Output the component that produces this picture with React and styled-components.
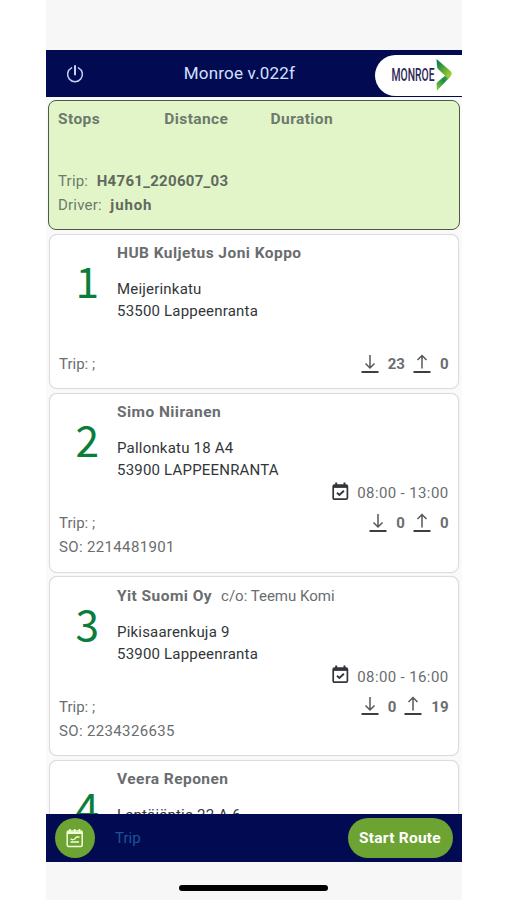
import React from 'react';
import styled, { createGlobalStyle } from 'styled-components';

const GlobalStyle = createGlobalStyle`
  * {
    box-sizing: border-box;
  }

  body {
    margin: 0;
    background: #ffffff;
    font-family: Roboto, 'Liberation Sans', sans-serif;
    font-size: 15px;
    color: #6a6d70;
  }
`;

const Screen = styled.div`
  display: flex;
  flex-direction: column;
  width: 415.5px;
  height: 900px;
  margin-left: 46px;
  background: #f7f7f7;
  overflow: hidden;
`;

const Header = styled.header`
  display: grid;
  grid-template-columns: 58px 1fr 86.5px;
  align-items: center;
  flex: none;
  height: 47.5px;
  margin-top: 49.5px;
  background: #020b52;
`;

const PowerButton = styled.button`
  display: flex;
  margin-left: 20px;
  padding: 0;
  width: 18px;
  border: none;
  background: none;
  color: #c3d3f5;
`;

const Title = styled.h1`
  margin: 0;
  text-align: center;
  font-size: 17px;
  font-weight: 400;
  letter-spacing: 0.2px;
  color: #d1e0ff;
`;

const LogoPill = styled.div`
  display: flex;
  align-items: center;
  height: 41px;
  margin-top: 4px;
  padding-left: 16px;
  border-radius: 20.5px 0 0 20.5px;
  background: #ffffff;
`;

const Content = styled.main`
  display: flex;
  flex-direction: column;
  flex: none;
  height: 716.5px;
  padding: 3px 2px 0;
  overflow: hidden;
  background: #fafafa;
`;

const Summary = styled.section`
  flex: none;
  height: 130px;
  margin-bottom: 3.5px;
  padding: 7px 9px;
  border: 1.5px solid #4c5a48;
  border-radius: 8px;
  background: #e2f5c8;
`;

const SummaryHead = styled.div`
  display: grid;
  grid-template-columns: 106.3px 106.3px 1fr;
  height: 60.5px;
  line-height: 23px;
  font-size: 15.5px;
  font-weight: 700;
  letter-spacing: 0.4px;
  color: #6c7a6c;
`;

const SummaryLine = styled.div`
  display: flex;
  gap: 8.5px;
  line-height: 24.4px;
  letter-spacing: 0.2px;
  color: #6c7a6c;

  b {
    letter-spacing: ${props => props.$spacing || '0.3px'};
    color: #5f6a5f;
  }
`;

const StopCard = styled.article`
  display: grid;
  grid-template-columns: 58px 1fr;
  grid-template-rows: 22px 14px 44px 24px 6px auto;
  flex: none;
  height: ${props => (props.$tall ? '180px' : '155.5px')};
  margin: 0 1px 3.5px;
  padding: 7.5px 9px;
  border: 1.5px solid #dcdcdc;
  border-radius: 8px;
  background: #ffffff;
  box-shadow: 0 0 1px #dcdcdc;
`;

const StopNumber = styled.div`
  grid-column: 1;
  grid-row: 1 / 4;
  padding-left: 16.5px;
  font-family: 'Noto Sans CJK SC', 'Noto Sans', sans-serif;
  font-size: 42.5px;
  line-height: 76px;
  color: #0b7d3b;
`;

const StopName = styled.div`
  grid-column: 2;
  grid-row: 1;
  display: flex;
  gap: 9px;
  line-height: 22px;
  white-space: nowrap;

  b {
    font-size: 15.5px;
    letter-spacing: 0.45px;
  }
`;

const Address = styled.div`
  grid-column: 2;
  grid-row: 3;
  line-height: 22px;
  letter-spacing: 0.2px;
  color: #32363a;
`;

const TimeWindow = styled.div`
  grid-column: 1 / 3;
  grid-row: 4;
  display: flex;
  align-items: center;
  justify-content: flex-end;
  gap: 8px;
  letter-spacing: 0.38px;

  svg {
    margin-top: -4px;
  }
`;

const Details = styled.div`
  grid-column: 1 / 3;
  grid-row: 6;
  display: flex;
  justify-content: space-between;
  line-height: 24.4px;
`;

const OrderNumber = styled.div`
  letter-spacing: 0.35px;
`;

const Loads = styled.div`
  display: flex;
  align-items: center;
  height: 25px;

  svg {
    margin: -2px 9px 0 0;
  }

  svg:last-of-type {
    margin-left: 8px;
  }
`;

const Footer = styled.footer`
  display: flex;
  align-items: center;
  flex: none;
  height: 48.5px;
  padding: 0 9px;
  background: #020b52;
`;

const RoundButton = styled.button`
  display: flex;
  align-items: center;
  justify-content: center;
  width: 40px;
  height: 40px;
  padding: 0;
  border: none;
  border-radius: 50%;
  background: #6ca332;
  color: #f2ffd9;
`;

const FooterLabel = styled.span`
  flex: 1;
  padding-left: 20px;
  color: #1a5499;
`;

const StartButton = styled.button`
  width: 105px;
  height: 40px;
  padding: 0;
  border: none;
  border-radius: 20px;
  background: #6ca332;
  color: #ffffff;
  font: 700 15.5px Roboto, 'Liberation Sans', sans-serif;
  letter-spacing: 0.25px;
`;

const HomeIndicator = styled.div`
  width: 149px;
  height: 6px;
  margin: 23px auto 0;
  border-radius: 3px;
  background: #000000;
`;

const PowerIcon = () => (
  <svg width="18" height="20" viewBox="0 0 18 20" fill="none" stroke="currentColor" strokeLinecap="round">
    <path d="M5.600 4.800a7.400 7.400 0 1 0 6.800 0" strokeWidth="1.500" />
    <path d="M9 3v8.500" strokeWidth="2" />
  </svg>
);

const Logo = () => (
  <svg width="66" height="36" viewBox="0 0 66 36">
    <defs>
      <linearGradient id="upper" x1="0" y1="0" x2="1" y2="1">
        <stop offset="0.1" stopColor="#0a7f4c" />
        <stop offset="0.9" stopColor="#a9d12c" />
      </linearGradient>
      <linearGradient id="lower" x1="0" y1="1" x2="1" y2="0">
        <stop offset="0" stopColor="#9ccc30" />
        <stop offset="0.55" stopColor="#128b4b" />
        <stop offset="1" stopColor="#8cc63a" />
      </linearGradient>
    </defs>
    <text
      x="0.5"
      y="24"
      fontFamily="Roboto, sans-serif"
      fontSize="19"
      fontWeight="500"
      fill="#2b2756"
      textLength="43"
      lengthAdjust="spacingAndGlyphs"
    >
      MONROE
    </text>
    <path d="M60.500 17l-1.500 3L46 33.500l-.5-7.500L56 17z" fill="url(#lower)" />
    <path d="M45.500 2L59.500 14q2 2 .8 4L57 21.500 47.500 12.500Q46 11 46 9z" fill="url(#upper)" />
  </svg>
);

const CalendarIcon = () => (
  <svg width="17" height="19" viewBox="0 0 17 19" fill="none" stroke="#32363a">
    <rect x="1.200" y="3.200" width="14.200" height="14" rx="1.300" strokeWidth="1.700" />
    <path d="M1.200 4.500h14.200" strokeWidth="2.800" />
    <path d="M4.200 .5v3M12.500 .5v3" strokeWidth="2" />
    <path d="M5 10.700l2.400 2.300 4.500-4.300" strokeWidth="1.900" />
  </svg>
);

const ScheduleIcon = () => (
  <svg width="18" height="20" viewBox="0 0 18 20" fill="none" stroke="currentColor" strokeWidth="1.500">
    <rect x="1.200" y="3" width="15" height="15.400" rx="1.500" />
    <path d="M1.200 5h15" strokeWidth="2" />
    <path d="M4 1v3M8.700 1v3M13.400 1v3" strokeWidth="1.600" />
    <path d="M4.500 10.800l2.200 1 2-.8 1.800-2h3M4.500 14h8.500" strokeWidth="1.300" />
  </svg>
);

const LoadIcon = ({ up }) => (
  <svg width="18" height="20" viewBox="0 0 18 20" fill="none">
    <path
      d={up ? 'M9 14.500V2M4.500 6L9 1.500l4.500 4.500' : 'M9 1v13M4.500 9.500l4.500 4.500 4.500-4.500'}
      stroke="#56595c"
      strokeWidth="1.500"
    />
    <path d="M.5 18h17" stroke="#3b3e42" strokeWidth="2" />
  </svg>
);

const stops = [
  {
    name: 'HUB Kuljetus Joni Koppo',
    address: ['Meijerinkatu', '53500 Lappeenranta'],
    down: 23,
    up: 0,
  },
  {
    name: 'Simo Niiranen',
    address: ['Pallonkatu 18 A4', '53900 LAPPEENRANTA'],
    time: '08:00 - 13:00',
    order: '2214481901',
    down: 0,
    up: 0,
  },
  {
    name: 'Yit Suomi Oy',
    careOf: 'Teemu Komi',
    address: ['Pikisaarenkuja 9', '53900 Lappeenranta'],
    time: '08:00 - 16:00',
    order: '2234326635',
    down: 0,
    up: 19,
  },
  {
    name: 'Veera Reponen',
    address: ['Lentäjäntie 22 A 6'],
    order: '',
  },
];

const Stop = ({ stop, number }) => (
  <StopCard $tall={stop.order !== undefined}>
    <StopNumber>{number}</StopNumber>
    <StopName>
      <b>{stop.name}</b>
      {stop.careOf && <span>c/o: {stop.careOf}</span>}
    </StopName>
    <Address>
      {stop.address.map(line => <div key={line}>{line}</div>)}
    </Address>
    {stop.time && (
      <TimeWindow>
        <CalendarIcon />
        {stop.time}
      </TimeWindow>
    )}
    {stop.down !== undefined && (
      <Details>
        <div>
          <div>Trip: ;</div>
          {stop.order && <OrderNumber>SO: {stop.order}</OrderNumber>}
        </div>
        <Loads>
          <LoadIcon />
          <b>{stop.down}</b>
          <LoadIcon up />
          <b>{stop.up}</b>
        </Loads>
      </Details>
    )}
  </StopCard>
);

const App = () => {
  return (
    <>
      <GlobalStyle />
      <Screen>
        <Header>
          <PowerButton aria-label="Log out"><PowerIcon /></PowerButton>
          <Title>Monroe v.022f</Title>
          <LogoPill><Logo /></LogoPill>
        </Header>
        <Content>
          <Summary>
            <SummaryHead>
              <span>Stops</span>
              <span>Distance</span>
              <span>Duration</span>
            </SummaryHead>
            <SummaryLine>Trip: <b>H4761_220607_03</b></SummaryLine>
            <SummaryLine $spacing="0.9px">Driver: <b>juhoh</b></SummaryLine>
          </Summary>
          {stops.map((stop, index) => (
            <Stop key={stop.name} stop={stop} number={index + 1} />
          ))}
        </Content>
        <Footer>
          <RoundButton aria-label="Schedule"><ScheduleIcon /></RoundButton>
          <FooterLabel>Trip</FooterLabel>
          <StartButton>Start Route</StartButton>
        </Footer>
        <HomeIndicator />
      </Screen>
    </>
  );
};

export default App;
